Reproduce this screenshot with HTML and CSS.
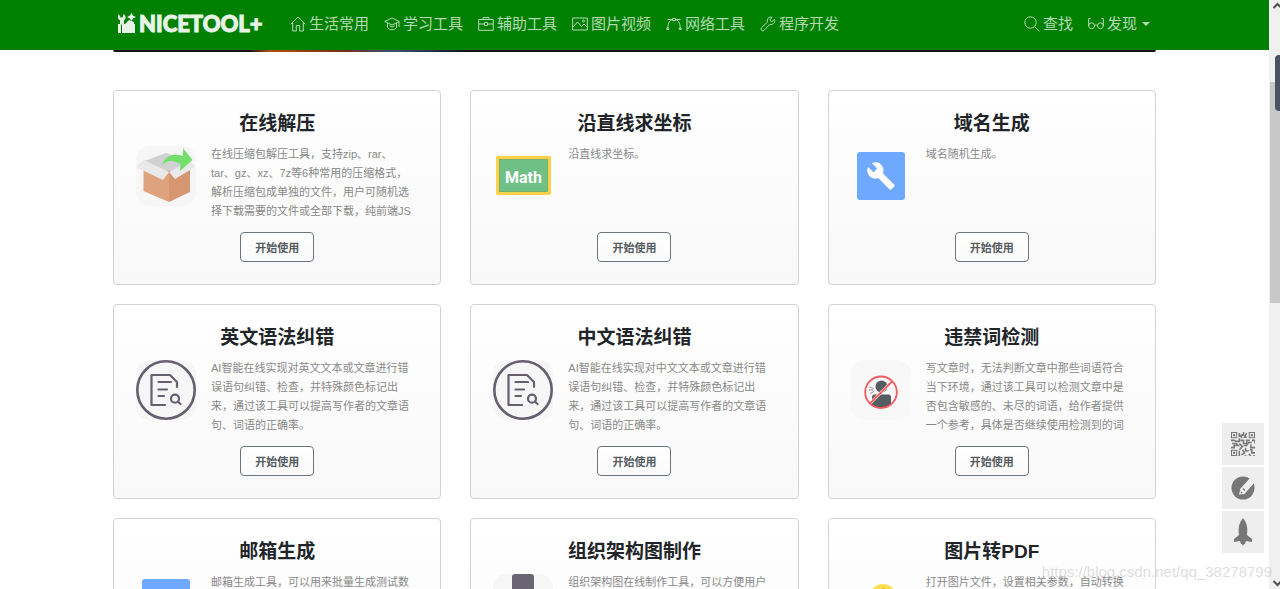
FILE: index.html
```html
<!DOCTYPE html>
<html lang="zh-CN">
<head>
  <meta charset="UTF-8">
  <meta name="viewport" content="width=device-width, initial-scale=1.0">
  <title>NICETOOL+</title>
  <link rel="stylesheet" href="styles.css">
</head>
<body>

<!-- Shared icon -->
<svg class="sprite" aria-hidden="true">
  <symbol id="icon-grammar" viewBox="0 0 60 60">
    <rect width="60" height="60" rx="14" fill="#f6f6f6"/>
    <g fill="none" stroke="#655f70" stroke-width="2.200" stroke-linecap="round" stroke-linejoin="round">
      <circle cx="30" cy="30" r="28.7" stroke-width="2.6"/>
      <path d="M29 45H15.500V15H34l7 7v5M22.500 22H35M22.500 29.500H31M22.500 36H28"/>
      <circle cx="39" cy="38.700" r="4"/>
      <path d="M42 41.700l2.500 2.300"/>
    </g>
  </symbol>
</svg>

<div class="window">
  <div class="page">
    <header class="navbar">
      <div class="container nav-inner">
        <a class="brand" href="#">
          <svg width="20" height="22" viewBox="0 0 20 22" fill="currentColor">
            <path d="M1 1l2 2 .5 1.500h2L6 3V1l2.200 1.500.4 3L7 7.500v4H3v-4L1 5.500z"/>
            <path d="M14.500 0l1.400 2.600L19 4l-3 1.500L14.500 8 13 5.500 10 4l3-1.400zM8 11l4-4 5 2v2z"/>
            <path d="M1 11h3v9H1zM5 11h13v9H5z"/>
          </svg>
          <span class="brand-name">NICETOOL+</span>
        </a>
        <nav class="nav-links">
          <a href="#">
            <svg class="nav-icon" viewBox="0 0 16 16"><path d="M.7 8.300L8 1l7.300 7.300M2.700 7v8h3.600V9.500h3.400V15h3.600V7"/></svg>
            生活常用
          </a>
          <a href="#">
            <svg class="nav-icon" viewBox="0 0 16 16"><path d="M8 2L.7 5.500 8 9l7.300-3.500zM3.500 7v4.500C6 14.500 10 14.500 12.500 11.500V7M15 6v5M5.500 9.800L8 11l2.500-1.200"/></svg>
            学习工具
          </a>
          <a href="#">
            <svg class="nav-icon" viewBox="0 0 16 16"><path d="M.7 3.500h14.600v10.800H.7zM5 3.500v-2h6v2M.7 8H6M10 8h5.300M6.500 6.500h3v3h-3z"/></svg>
            辅助工具
          </a>
          <a href="#">
            <svg class="nav-icon" viewBox="0 0 16 16"><path d="M.7 2h14.600v12H.7zM1 11l4.500-5 4 4.500L12 8l3 3"/><circle cx="11.500" cy="5" r="1"/></svg>
            图片视频
          </a>
          <a href="#">
            <svg class="nav-icon" viewBox="0 0 16 16"><path d="M1.800 12C1.800 7 4 4 6.500 3.500M9.500 3.500C12 4 14.200 7 14.200 12M6.500 2.500h3v2h-3zM1.500 3.500h5M9.500 3.500h5M.8 12h2v1.500h-2zM13.200 12h2v1.500h-2z"/></svg>
            网络工具
          </a>
          <a href="#">
            <svg class="nav-icon" viewBox="0 0 16 16"><path d="M14.500 3.500l-2.700 2.200-2-1.700L12 1.300C9 .2 6.500 3 7.500 6L1.300 12c-1.200 1.500.9 3.900 2.600 2.500L9.800 8.300c3 1 5.800-1.800 4.700-4.800z"/></svg>
            程序开发
          </a>
        </nav>
        <div class="nav-links nav-right">
          <a href="#">
            <svg class="nav-icon" viewBox="0 0 16 16"><circle cx="6.500" cy="6.500" r="5.700"/><path d="M10.700 10.700l4.800 4.800"/></svg>
            查找
          </a>
          <button type="button" class="nav-drop">
            <svg class="nav-icon" viewBox="0 0 16 16"><circle cx="3.600" cy="9.800" r="2.900"/><circle cx="12.400" cy="9.800" r="2.900"/><path d="M.7 10V2.500h2M15.300 10V2.500h-2M6.500 9.500q1.500-1.500 3 0"/></svg>
            发现
            <span class="caret"></span>
          </button>
        </div>
      </div>
    </header>

    <main class="container">
      <div class="banner"></div>
      <div class="cards">

        <article class="card">
          <h2>在线解压</h2>
          <div class="card-body">
            <svg class="card-icon" viewBox="0 0 60 60">
              <rect width="60" height="60" rx="14" fill="#f6f6f6"/>
              <path fill="#d1d1d1" d="M8 15L30 7l24 8-21 11z"/>
              <path fill="#dfa27f" d="M7.500 23L33 25v31L7.500 45z"/>
              <path fill="#d69671" d="M33 25l21-2v23L33 56z"/>
              <path fill="#e9e9e9" d="M8 14L0 21l27 13 6-8zM54 15l5 6-20 12-6-7z"/>
              <path fill="#74df6b" d="M26 19C30 9 37 7 47 10V2l9.500 12L44 25l.5-7C37 14 31 14 26 19z"/>
            </svg>
            <p>在线压缩包解压工具，支持zip、rar、<br>tar、gz、xz、7z等6种常用的压缩格式，<br>解析压缩包成单独的文件，用户可随机选择下载需要的文件或全部下载，纯前端JS</p>
          </div>
          <button type="button" class="use-button">开始使用</button>
        </article>

        <article class="card">
          <h2>沿直线求坐标</h2>
          <div class="card-body">
            <svg class="card-icon" viewBox="0 0 60 60">
              <rect x="3" y="10" width="55" height="39" rx="2" fill="#fdd04a"/>
              <rect x="6.500" y="13.500" width="48" height="32" fill="#6ec085" stroke="#5aa573" stroke-width=".7"/>
              <text class="math" x="30.500" y="37" text-anchor="middle">Math</text>
            </svg>
            <p>沿直线求坐标。</p>
          </div>
          <button type="button" class="use-button">开始使用</button>
        </article>

        <article class="card">
          <h2>域名生成</h2>
          <div class="card-body">
            <svg class="card-icon" viewBox="0 0 60 60">
              <rect x="6" y="6" width="48" height="48" rx="3" fill="#6fa8ff"/>
              <path fill="#fff" transform="translate(15 15) scale(1.250)" d="M22.700 19l-9.100-9.100c.9-2.300.4-5-1.500-6.900-2-2-5-2.400-7.400-1.300L9 6 6 9 1.600 4.700C.4 7.100.9 10.100 2.900 12.100c1.900 1.900 4.600 2.400 6.900 1.500l9.100 9.100c.4.4 1 .4 1.400 0l2.300-2.300c.5-.4.5-1.100.1-1.400z"/>
            </svg>
            <p>域名随机生成。</p>
          </div>
          <button type="button" class="use-button">开始使用</button>
        </article>

        <article class="card">
          <h2>英文语法纠错</h2>
          <div class="card-body">
            <svg class="card-icon"><use href="#icon-grammar"/></svg>
            <p>AI智能在线实现对英文文本或文章进行错误语句纠错、检查，并特殊颜色标记出来，通过该工具可以提高写作者的文章语句、词语的正确率。</p>
          </div>
          <button type="button" class="use-button">开始使用</button>
        </article>

        <article class="card">
          <h2>中文语法纠错</h2>
          <div class="card-body">
            <svg class="card-icon"><use href="#icon-grammar"/></svg>
            <p>AI智能在线实现对中文文本或文章进行错误语句纠错、检查，并特殊颜色标记出来，通过该工具可以提高写作者的文章语句、词语的正确率。</p>
          </div>
          <button type="button" class="use-button">开始使用</button>
        </article>

        <article class="card">
          <h2>违禁词检测</h2>
          <div class="card-body">
            <svg class="card-icon" viewBox="0 0 60 60">
              <rect width="60" height="60" rx="14" fill="#f8f8f8"/>
              <circle cx="30.500" cy="26.500" r="6" fill="#555d60"/>
              <path fill="#555d60" d="M21 37q0-2.500 2.500-2.500h14q2.500 0 2.500 2.500v7.500Q35 48 30 48q-5 0-9-3z"/>
              <path fill="none" stroke="#777" stroke-width=".8" d="M18.500 27l4 1.500M18 30h4.500M19 33.500l4-2"/>
              <path stroke="#f8f8f8" stroke-width="3" d="M19 43.500l22-22"/>
              <g fill="none" stroke="#f45b5f" stroke-width="1.800">
                <circle cx="30" cy="32.300" r="15.800"/>
                <path d="M19 43.500l22-22"/>
              </g>
            </svg>
            <p>写文章时，无法判断文章中那些词语符合当下环境，通过该工具可以检测文章中是否包含敏感的、未尽的词语，给作者提供一个参考，具体是否继续使用检测到的词</p>
          </div>
          <button type="button" class="use-button">开始使用</button>
        </article>

        <article class="card">
          <h2>邮箱生成</h2>
          <div class="card-body">
            <svg class="card-icon" viewBox="0 0 60 60">
              <rect x="6" y="5" width="48" height="48" rx="3" fill="#6fa8ff"/>
              <path fill="none" stroke="#fff" stroke-width="3" d="M14 20h32v22H14zM14 21l16 12 16-12"/>
            </svg>
            <p>邮箱生成工具，可以用来批量生成测试数</p>
          </div>
          <button type="button" class="use-button">开始使用</button>
        </article>

        <article class="card">
          <h2>组织架构图制作</h2>
          <div class="card-body">
            <svg class="card-icon" viewBox="0 0 60 60">
              <rect width="60" height="60" rx="14" fill="#f6f6f6"/>
              <path fill="#696573" d="M22 0h16q3 0 3 3v17H19V3q0-3 3-3zM4 40h16v18H4zM40 40h16v18H40z"/>
              <path fill="none" stroke="#696573" stroke-width="3" d="M30 20v10M12 40V30h36v10"/>
            </svg>
            <p>组织架构图在线制作工具，可以方便用户</p>
          </div>
          <button type="button" class="use-button">开始使用</button>
        </article>

        <article class="card">
          <h2>图片转PDF</h2>
          <div class="card-body">
            <svg class="card-icon" viewBox="0 0 60 60">
              <circle cx="32" cy="23" r="13" fill="#fadf4b"/>
              <path fill="#c9b040" d="M31 14h3v1.500h-3z"/>
              <path fill="#6ec085" d="M4 56l18-24 12 14 8-8 14 18z"/>
            </svg>
            <p>打开图片文件，设置相关参数，自动转换</p>
          </div>
          <button type="button" class="use-button">开始使用</button>
        </article>

      </div>
    </main>

    <!-- Floating shortcuts -->
    <aside class="side-tools">
      <button type="button" aria-label="二维码">
        <svg width="24" height="24" viewBox="0 0 23 23" fill="none" stroke="#777" stroke-width="1">
          <path d="M.5.500h5v5h-5zM17.500.500h5v5h-5zM.5 17.500h5v5h-5z"/>
          <path d="M2 3h2M19 3h2M2 20h2" stroke-width="2"/>
          <path stroke-width="1.500" d="M8 1v3h2M12 0v3h-2v3M15 1l-2 4h2M8 6v3H5l-2-1H0M1 11h4l2 2H3v2H0M9 8h3v3h3V8h3M8 11l3 3-3 3M12 13h3l2-3h3M20 8h3v3M19 12v3h4M14 15v3h3M8 18v5M11 17l2 3-3 2M13 23h2M18 17h2v3h3M17 21l2 2M22 22v1"/>
        </svg>
      </button>
      <button type="button" aria-label="反馈">
        <svg width="24" height="24" viewBox="0 0 24 24">
          <circle cx="12" cy="12" r="11.500" fill="#777"/>
          <path fill="#eee" d="M20 1l4 5-10.500 12L8 18.500l1.500-6z"/>
          <path fill="#777" d="M9.800 15l2 2-2 .5zM11.500 13l2 2 1-1-2-2z"/>
        </svg>
      </button>
      <button type="button" aria-label="返回顶部">
        <svg width="20" height="28" viewBox="0 0 20 28" fill="#777">
          <path d="M10 0c4 5 5 10 4 17l5 4v3l-6-1-1 3h-1l-1 2-1-2H8l-1-3-6 1v-3l5-4C5 10 6 5 10 0z"/>
        </svg>
      </button>
    </aside>
  </div>

  <div class="scrollbar">
    <svg width="11" height="10" viewBox="0 0 11 10"><path d="M4.500 8L8.500 4l4 4"/></svg>
    <div class="thumb"></div>
    <svg width="11" height="10" viewBox="0 0 11 10"><path d="M4.500 2l4 4 4-4"/></svg>
    <div class="dock"></div>
  </div>

  <div class="watermark">https://blog.csdn.net/qq_38278799</div>
</div>

</body>
</html>
```
FILE: styles.css
```css
/* Basic Page Styling */
* {
  box-sizing: border-box;
}

body {
  margin: 0;
  font-family: 'Liberation Sans', 'Noto Sans CJK SC', sans-serif;
  color: #212529;
  background-color: #fff;
}

button {
  font-family: inherit;
  cursor: pointer;
}

.sprite {
  display: none;
}

.window {
  position: relative;
  display: flex;
  height: 100vh;
  overflow: hidden;
}

.page {
  position: relative;
  flex: 1;
  overflow: hidden;
}

.container {
  width: 100%;
  max-width: 1083px;
  margin: 0 auto;
  padding: 0 20px;
}

/* Navbar */
.navbar {
  background-color: #008000;
}

.nav-inner {
  display: flex;
  align-items: center;
  height: 50px;
  padding: 0 26px 2px 24px;
}

.brand {
  display: flex;
  align-items: center;
  gap: 2px;
  width: 173px;
  color: #e8f3e8;
  text-decoration: none;
}

.brand-name {
  font-family: Lato, sans-serif;
  font-size: 22px;
  font-weight: 900;
  line-height: 26px;
  -webkit-text-stroke: 1px #e8f3e8;
}

.nav-links {
  display: flex;
  gap: 15px;
}

.nav-links a,
.nav-drop {
  display: flex;
  align-items: center;
  gap: 3px;
  padding: 0;
  border: none;
  background: none;
  font-size: 15px;
  line-height: 24px;
  color: #b4dab4;
  text-decoration: none;
  white-space: nowrap;
}

.nav-right {
  margin-left: auto;
}

.nav-icon {
  width: 16px;
  height: 16px;
  fill: none;
  stroke: currentColor;
  stroke-width: 1;
}

.caret {
  margin-left: 2px;
  border: 4px solid transparent;
  border-top-color: currentColor;
  border-bottom: 0;
}

/* Banner */
.banner {
  height: 2px;
  margin-bottom: 38px;
  border-radius: 0 0 4px 4px;
  background: linear-gradient(to right, #111 0 13%, #b05010 15%, #7a2c12 22%, #33507a 27%, #111 34% 100%);
}

/* Tool Cards */
.cards {
  display: grid;
  grid-template-columns: repeat(3, 1fr);
  gap: 19px 29px;
}

.card {
  display: flex;
  flex-direction: column;
  align-items: center;
  padding: 19px 22px 22px;
  border: 1px solid #d2d2d2;
  border-radius: 4px;
  background: linear-gradient(#fff, #f8f8f8);
}

.card h2 {
  margin: 0 0 7px;
  font-size: 19px;
  line-height: 28px;
}

.card-body {
  display: flex;
  gap: 15px;
  width: 100%;
  height: 76px;
}

.card-icon {
  flex: none;
  width: 60px;
  height: 60px;
  margin-top: 1px;
}

.card-body p {
  margin: 0;
  font-size: 11px;
  line-height: 19px;
  color: #888;
}

.math {
  font: bold 16px Roboto, sans-serif;
  fill: #fff;
}

.use-button {
  height: 30px;
  margin-top: 11px;
  padding: 0 14px;
  border: 1px solid #6c757d;
  border-radius: 4px;
  background: linear-gradient(#fff, #fafafa);
  font-size: 11px;
  font-weight: bold;
  color: #555b60;
}

/* Floating Tools */
.side-tools {
  position: absolute;
  right: 5px;
  bottom: 36px;
  display: flex;
  flex-direction: column;
  gap: 2px;
}

.side-tools button {
  display: flex;
  align-items: center;
  justify-content: center;
  width: 42px;
  height: 42px;
  padding: 0;
  border: none;
  background-color: #eee;
}

.watermark {
  position: absolute;
  right: 8px;
  bottom: 6px;
  font-size: 15px;
  line-height: 22px;
  color: rgba(190, 190, 190, 0.5);
}

/* Scrollbar */
.scrollbar {
  position: relative;
  display: flex;
  flex-direction: column;
  justify-content: space-between;
  width: 11px;
  background-color: #f0f0f0;
}

.scrollbar svg {
  fill: none;
  stroke: #505050;
  stroke-width: 2;
}

.thumb {
  position: absolute;
  top: 14%;
  right: 0;
  left: 1px;
  height: 221px;
  background-color: #c8c8c8;
}

.dock {
  position: absolute;
  top: 55px;
  right: 0;
  width: 5px;
  height: 56px;
  border-radius: 4px 0 0 4px;
  background-color: #4b5261;
}
```
